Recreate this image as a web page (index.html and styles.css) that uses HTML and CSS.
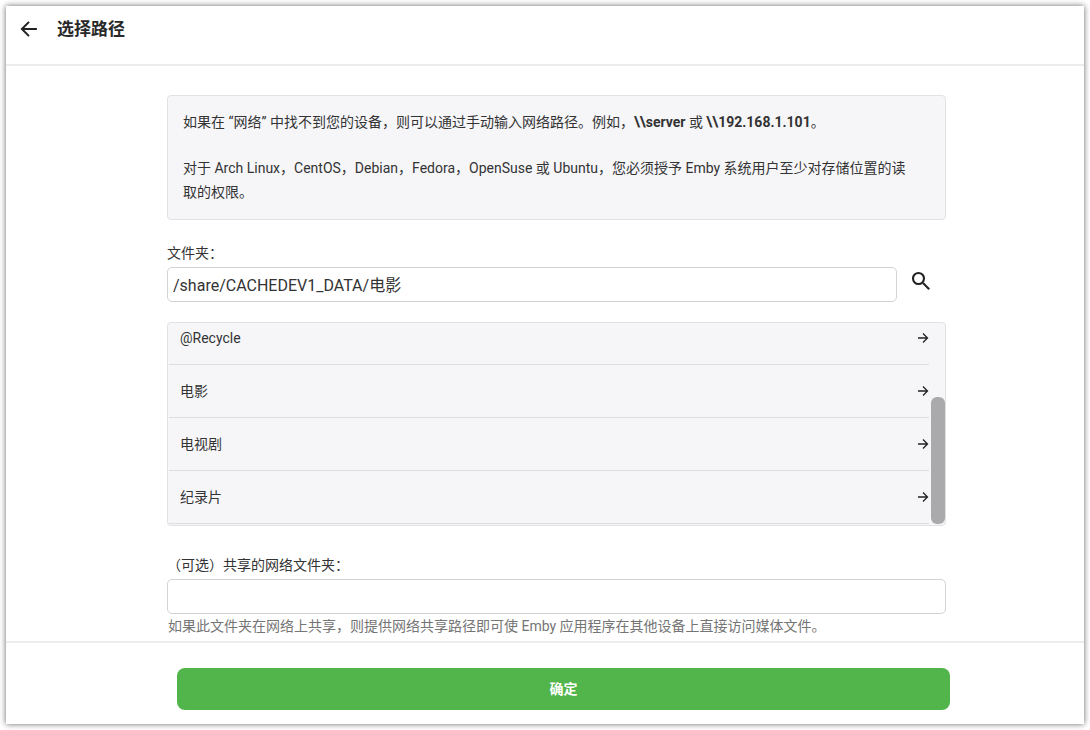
FILE: index.html
```html
<!DOCTYPE html>
<html lang="zh-CN">
<head>
<meta charset="utf-8">
<meta name="viewport" content="width=device-width, initial-scale=1">
<title>选择路径</title>
<link rel="stylesheet" href="styles.css">
</head>
<body>
<main class="dialog">
  <header class="dialog-header">
    <button class="icon-button" type="button" aria-label="返回">
      <svg class="icon-back" viewBox="0 0 24 24" aria-hidden="true"><path d="M21.500 12H4.500M12 3.500L3.500 12l8.500 8.500"/></svg>
    </button>
    <h1 class="dialog-title">选择路径</h1>
  </header>

  <form class="dialog-form">
    <div class="dialog-body">
      <div class="column">
        <section class="notice">
          <p>如果在 “网络” 中找不到您的设备，则可以通过手动输入网络路径。例如，<b>\\server</b> 或 <b>\\192.168.1.101</b>。</p>
          <p>对于 Arch Linux，CentOS，Debian，Fedora，OpenSuse 或 Ubuntu，您必须授予 Emby 系统用户至少对存储位置的读取的权限。</p>
        </section>

        <label class="field-label" for="folder">文件夹：</label>
        <div class="field-row">
          <input class="text-field" id="folder" type="text" value="/share/CACHEDEV1_DATA/电影">
          <button class="icon-button" type="button" aria-label="搜索">
            <svg class="icon-search" viewBox="0 0 24 24" aria-hidden="true"><circle cx="9.500" cy="9.500" r="5.500"/><path d="M14 14l6.200 6.200"/></svg>
          </button>
        </div>

        <div class="folder-box">
          <div class="folder-list">
            <button class="folder" type="button">@Recycle<svg class="icon-next" viewBox="0 0 12 12" aria-hidden="true"><path d="M1 6h9.500M6 1.500L10.500 6 6 10.500"/></svg></button>
            <button class="folder" type="button">电影<svg class="icon-next" viewBox="0 0 12 12" aria-hidden="true"><path d="M1 6h9.500M6 1.500L10.500 6 6 10.500"/></svg></button>
            <button class="folder" type="button">电视剧<svg class="icon-next" viewBox="0 0 12 12" aria-hidden="true"><path d="M1 6h9.500M6 1.500L10.500 6 6 10.500"/></svg></button>
            <button class="folder" type="button">纪录片<svg class="icon-next" viewBox="0 0 12 12" aria-hidden="true"><path d="M1 6h9.500M6 1.500L10.500 6 6 10.500"/></svg></button>
          </div>
          <div class="scroll-track"><div class="scroll-thumb"></div></div>
        </div>

        <label class="field-label" for="network">（可选）共享的网络文件夹：</label>
        <input class="text-field" id="network" type="text" aria-describedby="network-help">
        <p class="field-help" id="network-help">如果此文件夹在网络上共享，则提供网络共享路径即可使 Emby 应用程序在其他设备上直接访问媒体文件。</p>
      </div>
    </div>
    <footer class="dialog-footer">
      <button class="submit" type="button">确定</button>
    </footer>
  </form>
</main>
</body>
</html>
```
FILE: styles.css
```css
* {
  box-sizing: border-box;
}

body {
  margin: 0;
  padding: 6px;
  min-height: 100vh;
  display: flex;
  background: #fff;
  color: #333;
  font: 14px/24px Roboto, "Noto Sans CJK SC", sans-serif;
}

h1,
p {
  margin: 0;
}

button,
input {
  font: inherit;
  color: inherit;
}

button {
  border: 0;
  padding: 0;
  background: none;
  cursor: pointer;
}

svg {
  display: block;
  fill: none;
  stroke: #222;
}

.dialog {
  flex: 1;
  min-width: 0;
  display: flex;
  flex-direction: column;
  background: #fff;
  box-shadow: 0 0 6px rgba(0, 0, 0, 0.6);
}

.dialog-header {
  display: flex;
  align-items: center;
  gap: 18px;
  padding: 11px 13px 23px;
  border-bottom: 2px solid #ececec;
}

.dialog-title {
  color: #292929;
  font-size: 17px;
  font-weight: 700;
  line-height: 24px;
}

.icon-button {
  flex: none;
}

.icon-back {
  width: 20px;
  height: 20px;
  stroke-width: 2.4;
}

.icon-search {
  width: 24px;
  height: 24px;
  stroke-width: 2.1;
}

.dialog-form {
  flex: 1;
  display: flex;
  flex-direction: column;
}

.dialog-body {
  flex: 1;
  padding: 29px 0 3px 23px;
}

.column {
  max-width: 779px;
  margin: 0 auto;
}

.notice {
  display: grid;
  gap: 22px;
  margin-bottom: 21px;
  padding: 14px 30px 15px 15px;
  border: 1px solid #e2e2e4;
  border-radius: 4px;
  background: #f6f6f9;
}

.notice b {
  font-weight: 700;
}

.field-label {
  display: block;
  padding-bottom: 2px;
}

.field-row {
  display: flex;
  align-items: flex-start;
  gap: 12px;
  padding-right: 13px;
}

.field-row .icon-button {
  padding-top: 2px;
}

.text-field {
  display: block;
  width: 100%;
  min-width: 0;
  height: 35px;
  padding: 0 5px 2px;
  border: 1px solid #d3d3d3;
  border-radius: 5px;
  background: #fff;
  font-size: 16px;
}

.folder-box {
  position: relative;
  margin: 20px 0 27px;
  padding: 0 16px 1px 1px;
  border: 1px solid #e2e2e4;
  border-radius: 4px;
  background: #f6f6f9;
}

.folder-list {
  display: flex;
  flex-direction: column;
  justify-content: flex-end;
  height: 201px;
  overflow: hidden;
}

.folder {
  flex: none;
  display: flex;
  align-items: center;
  justify-content: space-between;
  height: 53px;
  padding: 0 0 0 11px;
  border-bottom: 1px solid #dedee0;
  text-align: left;
}

.icon-next {
  width: 12px;
  height: 12px;
  stroke-width: 1.3;
}

.scroll-track {
  position: absolute;
  top: 0;
  right: 0;
  bottom: 1px;
  width: 14px;
  display: flex;
  align-items: flex-end;
}

.scroll-thumb {
  width: 100%;
  height: 63%;
  border-radius: 6px;
  background: #aaaaac;
}

.field-help {
  padding-left: 1px;
  color: #757575;
}

.dialog-footer {
  padding: 25px 0 14px 37px;
  border-top: 2px solid #ececec;
}

.submit {
  display: block;
  width: 100%;
  max-width: 773px;
  height: 42px;
  margin: 0 auto;
  border-radius: 8px;
  background: #52b54b;
  color: #fff;
  font-weight: 700;
}
```
